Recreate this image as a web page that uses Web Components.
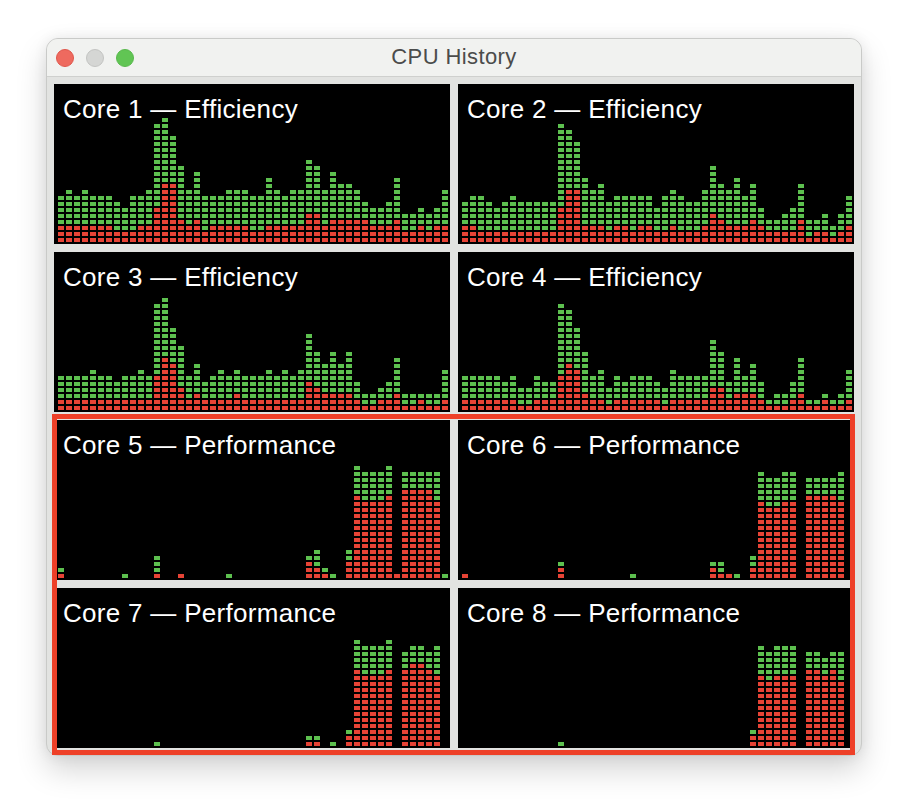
<!DOCTYPE html>
<html>
<head>
<meta charset="utf-8">
<title>CPU History</title>
<style>
  html, body { margin: 0; background: #ffffff; }
  body { box-sizing: border-box; min-height: 810px; padding: 38px 0 0 46px; font-family: "Liberation Sans", Arial, sans-serif; }
</style>
</head>
<body>
<cpu-window titulo="CPU History">
  <core-panel nombre="Core 1 — Efficiency" datos="8:3 9:3 8:3 9:3 8:3 8:3 8:3 7:2 6:2 8:2 8:3 9:3 20:6 21:10 18:10 13:4 9:3 12:4 8:2 8:3 8:3 9:3 9:3 9:3 8:2 8:2 11:3 9:3 8:3 9:3 9:3 14:5 13:5 9:3 12:4 10:4 10:4 9:4 7:4 6:3 6:3 7:3 11:4 5:2 5:2 6:3 5:2 6:3 9:3"></core-panel>
  <core-panel nombre="Core 2 — Efficiency" datos="7:3 8:3 8:2 7:2 6:2 7:2 8:2 7:2 7:2 7:2 7:2 7:2 20:6 19:9 17:9 11:3 9:3 10:3 7:2 8:3 8:3 8:2 8:3 8:3 6:2 8:2 9:3 8:2 7:2 7:2 9:3 13:5 10:4 9:3 11:3 8:3 10:4 6:3 4:2 4:2 5:2 6:2 10:4 4:1 4:2 5:2 3:1 5:2 8:3"></core-panel>
  <core-panel nombre="Core 3 — Efficiency" datos="6:2 6:2 6:2 6:2 7:2 6:2 6:2 5:2 6:2 6:2 7:2 6:2 18:6 19:9 14:8 11:4 6:2 8:3 5:2 6:2 7:2 6:2 7:3 6:2 6:2 6:2 7:2 6:2 7:2 6:2 7:2 13:5 10:4 8:3 10:3 8:3 10:3 5:2 3:1 3:1 4:2 5:2 9:3 3:1 3:1 3:2 3:1 3:1 7:2"></core-panel>
  <core-panel nombre="Core 4 — Efficiency" datos="6:2 6:2 6:2 6:2 6:2 5:2 6:2 4:1 4:1 6:2 5:2 5:2 18:6 17:8 14:7 10:3 6:2 7:2 4:1 6:2 5:2 6:2 6:2 6:2 5:2 4:1 7:2 6:2 6:2 6:2 6:2 12:4 10:4 5:2 9:3 6:3 8:3 5:2 2:1 3:1 3:1 5:2 9:3 2:1 2:1 3:2 2:1 3:1 7:2"></core-panel>
  <core-panel nombre="Core 5 — Performance" datos="2:1 0:0 0:0 0:0 0:0 0:0 0:0 0:0 1:0 0:0 0:0 0:0 4:1 0:0 0:0 1:1 0:0 0:0 0:0 0:0 0:0 1:0 0:0 0:0 0:0 0:0 0:0 0:0 0:0 0:0 0:0 4:3 5:2 2:1 1:0 0:0 5:3 19:14 18:13 18:13 18:13 19:14 1:1 18:15 18:15 18:15 18:15 18:13 1:0"></core-panel>
  <core-panel nombre="Core 6 — Performance" datos="1:1 0:0 0:0 0:0 0:0 0:0 0:0 0:0 0:0 0:0 0:0 0:0 3:2 0:0 0:0 0:0 0:0 0:0 0:0 0:0 0:0 1:0 0:0 0:0 0:0 0:0 0:0 0:0 0:0 0:0 0:0 3:2 3:1 1:1 1:0 0:0 4:2 18:13 17:12 17:12 18:13 18:13 0:0 17:14 17:14 17:14 17:14 18:13 0:0"></core-panel>
  <core-panel nombre="Core 7 — Performance" datos="0:0 0:0 0:0 0:0 0:0 0:0 0:0 0:0 0:0 0:0 0:0 0:0 1:0 0:0 0:0 0:0 0:0 0:0 0:0 0:0 0:0 0:0 0:0 0:0 0:0 0:0 0:0 0:0 0:0 0:0 0:0 2:1 2:1 0:0 1:0 0:0 3:2 18:13 17:12 17:12 17:12 18:13 0:0 16:13 17:14 17:14 16:13 17:12 0:0"></core-panel>
  <core-panel nombre="Core 8 — Performance" datos="0:0 0:0 0:0 0:0 0:0 0:0 0:0 0:0 0:0 0:0 0:0 0:0 1:0 0:0 0:0 0:0 0:0 0:0 0:0 0:0 0:0 0:0 0:0 0:0 0:0 0:0 0:0 0:0 0:0 0:0 0:0 0:0 0:0 0:0 0:0 0:0 3:2 17:12 16:11 17:12 17:12 17:12 0:0 16:13 16:13 15:12 16:13 16:11 0:0"></core-panel>
  <marco-rojo slot="encima"></marco-rojo>
</cpu-window>

<script>
//Ventana con barra de titulo y rejilla de paneles
class cpuWindow extends HTMLElement{
    connectedCallback(){
        let shadowRoot = this.attachShadow({mode: 'open'});
        shadowRoot.innerHTML = `
        <style>
            :host {
                display: block;
                position: relative;
                box-sizing: border-box;
                width: 816px;
                height: 718px;
                background: #e2e3e1;
                border: 1px solid #c9cac8;
                border-radius: 12px;
                box-shadow: 0 14px 30px rgba(0, 0, 0, 0.17), 0 0 14px rgba(0, 0, 0, 0.07);
            }
            header {
                display: flex;
                align-items: center;
                gap: 12px;
                position: relative;
                box-sizing: border-box;
                height: 38px;
                padding: 0 0 0 9px;
                background: #f1f2f0;
                border-bottom: 1px solid #cfd0ce;
                border-radius: 11px 11px 0 0;
            }
            .luz {
                box-sizing: border-box;
                width: 18px;
                height: 18px;
                border-radius: 50%;
            }
            .roja { background: #ee6a5f; border: 1px solid #e0564b; }
            .gris { background: #d5d6d4; border: 1px solid #c3c4c2; }
            .verde { background: #61c554; border: 1px solid #58b94c; }
            h1 {
                position: absolute;
                inset: 0;
                margin: 0;
                font: 400 22px/36px "Liberation Sans", Arial, sans-serif;
                letter-spacing: 0.4px;
                color: #4b4c4b;
                text-align: center;
            }
            main {
                display: grid;
                grid-template-columns: 396px 396px;
                grid-auto-rows: 160px;
                gap: 8px;
                padding: 7px;
            }
        </style>
        <header>
            <h1>${this.getAttribute('titulo')}</h1>
            <div class="luz roja"></div>
            <div class="luz gris"></div>
            <div class="luz verde"></div>
        </header>
        <main><slot></slot></main>
        <slot name="encima"></slot>
        `;
    }
}

//Panel negro con el nombre del nucleo y sus barras
class corePanel extends HTMLElement{
    connectedCallback(){
        let shadowRoot = this.attachShadow({mode: 'open'});
        let columnas = this.getAttribute('datos').split(' ').map(par => this.columna(par)).join('');
        shadowRoot.innerHTML = `
        <style>
            :host {
                display: flex;
                flex-direction: column;
                box-sizing: border-box;
                height: 160px;
                padding: 0 2px 2px 4px;
                background: #000000;
            }
            .nombre {
                height: 34px;
                padding: 11px 0 0 5px;
                box-sizing: border-box;
                font: 400 26px/28px "Liberation Sans", Arial, sans-serif;
                letter-spacing: 0.3px;
                color: #ffffff;
                white-space: nowrap;
            }
            .barras {
                display: flex;
                align-items: flex-end;
                gap: 2px;
                margin-top: auto;
                height: 124px;
            }
            .col {
                display: flex;
                flex-direction: column-reverse;
                gap: 2px;
                width: 6px;
            }
            i { display: block; height: 4px; background: #5dc04f; }
            i.r { background: #e64335; }
        </style>
        <div class="nombre">${this.getAttribute('nombre')}</div>
        <div class="barras">${columnas}</div>
        `;
    }

    columna(par){
        const [total, rojas] = par.split(':').map(Number);
        let celdas = '';
        for (let n = 0; n < total; n++) {
            celdas += n < rojas ? '<i class="r"></i>' : '<i></i>';
        }
        return `<div class="col">${celdas}</div>`;
    }
}

//Marco rojo encima de los nucleos de rendimiento
class marcoRojo extends HTMLElement{
    connectedCallback(){
        let shadowRoot = this.attachShadow({mode: 'open'});
        shadowRoot.innerHTML = `
        <style>
            :host {
                position: absolute;
                left: 5px;
                top: 375px;
                box-sizing: border-box;
                width: 803px;
                height: 341px;
                border: 5px solid #ee4028;
                pointer-events: none;
            }
        </style>
        `;
    }
}

customElements.define('cpu-window', cpuWindow);
customElements.define('core-panel', corePanel);
customElements.define('marco-rojo', marcoRojo);
</script>
</body>
</html>
